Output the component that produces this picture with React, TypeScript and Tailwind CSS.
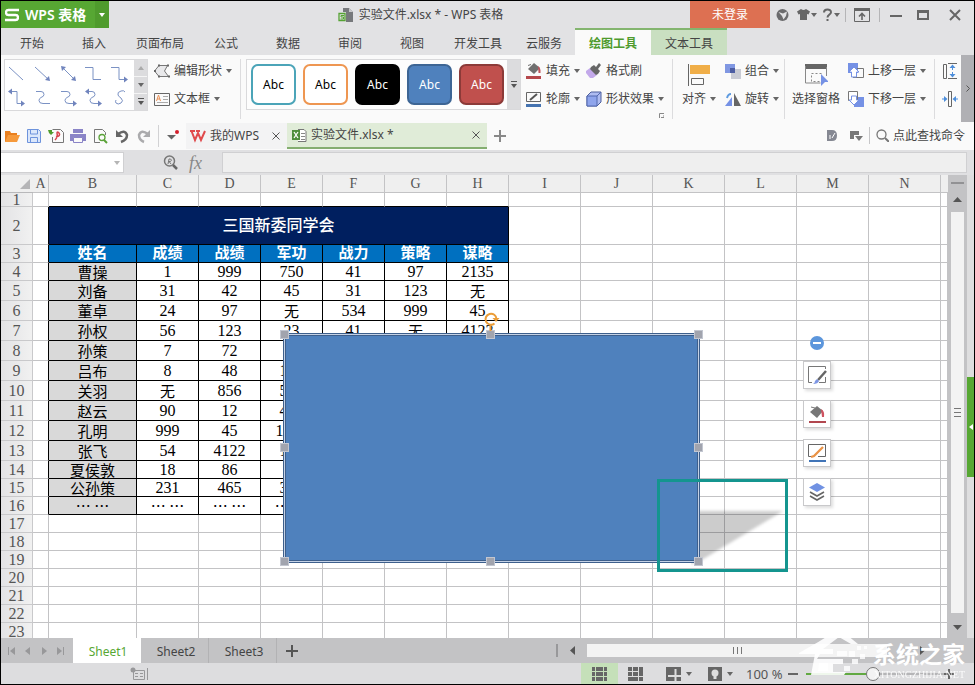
import type { ReactNode } from "react";

type Kids = { children?: ReactNode };

function Caret({ className = "text-[#666]" }: { className?: string }) {
  return (
    <svg className={`shrink-0 ${className}`} width="6" height="4" viewBox="0 0 6 4" aria-hidden="true">
      <path d="M0 0h6L3 4z" fill="currentColor" />
    </svg>
  );
}

function Icon({ w = 16, h = 16, children }: Kids & { w?: number; h?: number }) {
  return (
    <svg className="shrink-0" width={w} height={h} viewBox={`0 0 ${w} ${h}`} fill="none" aria-hidden="true">
      {children}
    </svg>
  );
}

/* ---------- Title bar ---------- */

function TitleBar() {
  return (
    <header className="flex h-[27px] shrink-0 text-[#444]">
      <button className="flex w-[108px] items-center bg-[#57a733] text-white" aria-label="WPS 表格">
        <span className="flex h-full w-[94px] items-center gap-[6px] pl-1">
          <Icon w={14} h={14}>
            <path d="M14 2H3.5Q1 2 1 4.5T3.5 7h7Q13 7 13 9.5T10.500 12H0" stroke="#fff" strokeWidth="2.400" />
          </Icon>
          <span className="text-[14px] leading-5 font-semibold whitespace-nowrap">WPS 表格</span>
        </span>
        <span className="flex h-full flex-1 items-center bg-[#4f9b2d] pl-[4px]">
          <Caret className="text-white" />
        </span>
      </button>
      <div className="flex flex-1 items-center justify-center gap-[6px] pl-[42px] text-[12px]">
        <Icon w={15} h={16}>
          <path d="M5 1h6l4 4v10H5z" fill="#77797c" />
          <path d="M11 1v4h4z" fill="#c9c9cb" />
          <path d="M0 5h8v10H0z" fill="#e2e2e4" />
          <path d="M1 6.500h6v7H1z" stroke="#56a334" strokeWidth="1.300" />
          <path d="M6 8.500H3v1.500h2.500v2H2.500" stroke="#56a334" />
        </Icon>
        <h1>实验文件.xlsx * - WPS 表格</h1>
      </div>
      <div className="flex items-center">
        <button className="h-full w-20 bg-[#dd7052] text-[12px] text-white">未登录</button>
        <button className="ml-[6px]" aria-label="皮肤中心">
          <Icon w={13} h={14}>
            <circle cx="6.500" cy="7" r="6" fill="#6b6b6d" />
            <path d="M2.500 4l4.500 1.500L11 3.500 10 8l-2.500 3.500L6 8z" fill="#e2e2e4" />
          </Icon>
        </button>
        <button className="ml-[8px] flex items-center gap-px" aria-label="更换皮肤">
          <Icon w={13} h={13}>
            <path d="M4 1q2.500 2 5 0l4 2.500-1.500 3L10 6v6H3V6l-1.500.5L0 3.500z" fill="#666" />
          </Icon>
          <Caret />
        </button>
        <button className="ml-[6px] flex items-center gap-[2px]" aria-label="帮助">
          <Icon w={9} h={14}>
            <path d="M1 4.500C1 .500 8 .500 8 4.200 8 6.500 4.500 6.500 4.500 9.500" stroke="#666" strokeWidth="2" />
            <path d="M3.500 11h2v2h-2z" fill="#666" />
          </Icon>
          <Caret />
        </button>
        <span className="ml-[5px] h-[14px] w-px bg-[#b5b5b7]" />
        <button className="ml-2" aria-label="隐藏功能区">
          <Icon>
            <path d="M.5 1.500h15v13H.5z" stroke="#666" />
            <path d="M0 1h16v3H0z" fill="#666" />
            <path d="M8 13V7M5 9.500 8 6.500l3 3" stroke="#666" strokeWidth="1.600" />
          </Icon>
        </button>
        <span className="ml-[9px] h-[14px] w-px bg-[#b5b5b7]" />
        <button className="ml-[10px]" aria-label="最小化">
          <Icon w={12} h={12}><path d="M0 7h12" stroke="#666" strokeWidth="2" /></Icon>
        </button>
        <button className="ml-[15px]" aria-label="最大化">
          <Icon w={12} h={12}><path d="M1 2h10v8H1zM1 3h10" stroke="#666" strokeWidth="2" /></Icon>
        </button>
        <button className="mr-[13px] ml-5" aria-label="关闭">
          <Icon w={12} h={12}><path d="M1 1l10 10M11 1 1 11" stroke="#666" strokeWidth="2" /></Icon>
        </button>
      </div>
    </header>
  );
}

/* ---------- Ribbon tabs ---------- */

const tabs = ["开始", "插入", "页面布局", "公式", "数据", "审阅", "视图", "开发工具", "云服务"];

function RibbonTabs() {
  return (
    <nav className="flex h-[27px] shrink-0 text-[12px] text-[#444]">
      {tabs.map((t) => (
        <button key={t} className="min-w-[62px] px-[11px] pt-[4px]">{t}</button>
      ))}
      <div className="flex border-t-2 border-[#84b56f]">
        <button className="w-[76px] bg-[#fafafa] pt-[2px] font-bold text-[#4f9b2d]">绘图工具</button>
        <button className="w-[76px] bg-[#c9dfc1] pt-[2px]">文本工具</button>
      </div>
    </nav>
  );
}

/* ---------- Ribbon ---------- */

const connectors: { label: string; line: string; heads?: string }[] = [
  { label: "直线", line: "M4 6l14 13" },
  { label: "箭头", line: "M4 6l14 13", heads: "M19 20l-5-1 4-4z" },
  { label: "双箭头", line: "M6 7l12 12", heads: "M4 5l5 1-4 4zM19 20l-5-1 4-4z" },
  { label: "肘形连接符", line: "M3 6.500h8v12h8" },
  { label: "肘形箭头", line: "M3 6.500h8v12h6", heads: "M20 18.500l-4-3v6z" },
  { label: "肘形双箭头", line: "M6 5.500h6v12h5", heads: "M3 5.500l4-3v6zM20 17.500l-4-3v6z" },
  { label: "曲线连接符", line: "M5 5.500h5q3 0 3 3 0 2-3 3-2 1-2 3 0 3 4 3h7" },
  { label: "曲线箭头", line: "M4 5.500h6q3 0 3 3 0 2-3 3-2 1-2 3 0 3 4 3h5", heads: "M20 17.500l-4-3v6z" },
  { label: "曲线双箭头", line: "M6 5.500h4q3 0 3 3 0 2-3 3-2 1-2 3 0 3 4 3h5", heads: "M3 5.500l4-3v6zM20 17.500l-4-3v6z" },
  { label: "曲线", line: "M17 6q-1-2-4-1-4 1-3 4 1 2 3 3 3 3 0 5-3 2-5 0-1-1 0-3" },
];

const styles = [
  { name: "蓝绿轮廓", cls: "border-[#4ba4b8] bg-white text-black" },
  { name: "橙色轮廓", cls: "border-[#ee9651] bg-white text-black" },
  { name: "黑色填充", cls: "border-black bg-black text-white" },
  { name: "蓝色填充", cls: "border-[#3d6594] bg-[#4f81bd] text-white" },
  { name: "红色填充", cls: "border-[#8c3a38] bg-[#c0504d] text-white" },
];

function Tool({ icon, label, drop = true }: { icon: ReactNode; label: string; drop?: boolean }) {
  return (
    <button className="flex h-6 items-center gap-1 whitespace-nowrap">
      {icon}
      <span>{label}</span>
      {drop && <Caret />}
    </button>
  );
}

function Group({ className, children }: Kids & { className: string }) {
  return <div className={`flex shrink-0 flex-col items-start gap-1 ${className}`}>{children}</div>;
}

function Divider() {
  return <span className="h-[60px] w-px shrink-0 bg-[#dcdcde]" />;
}

function BucketIcon() {
  return (
    <Icon>
      <path d="M8 0l6 5-6 6-6-5z" fill="#707070" />
      <path d="M2 2.500l3-1" stroke="#707070" />
      <path d="M12 3q3 2 2.500 7h-2z" fill="#c0545c" />
      <path d="M0 13h15v3H0z" fill="#b5474c" />
    </Icon>
  );
}

function Ribbon() {
  return (
    <section className="flex h-[67px] shrink-0 bg-[#fafafa] text-[12px] text-[#444]" aria-label="绘图工具">
      <div className="flex min-w-0 flex-1 items-start overflow-hidden pt-1 pl-[3px]">
        <div className="flex h-[52px] w-[144px] shrink-0 border border-[#d9d9db] bg-white">
          <div className="grid flex-1 grid-cols-5">
            {connectors.map((c) => (
              <button key={c.label} aria-label={c.label}>
                <Icon w={24} h={24}>
                  <path d={c.line} stroke="#7b92c4" />
                  {c.heads && <path d={c.heads} fill="#7084bd" />}
                </Icon>
              </button>
            ))}
          </div>
          <div className="flex w-[13px] flex-col bg-[#dcdcde]">
            <button className="flex flex-1 items-center justify-center" aria-label="上一行">
              <Icon w={6} h={4}><path d="M0 4h6L3 0z" fill="#aaa" /></Icon>
            </button>
            <button className="flex flex-1 items-center justify-center border-y border-[#f5f5f5]" aria-label="下一行"><Caret /></button>
            <button className="flex flex-1 items-center justify-center" aria-label="更多形状">
              <Icon w={6} h={8}><path d="M0 0h6v1H0zM0 3h6L3 7z" fill="#555" /></Icon>
            </button>
          </div>
        </div>
        <Group className="ml-[6px] w-[86px]">
          <Tool label="编辑形状" icon={
            <Icon><path d="M5 2.500h8.500L10.500 8l4 5.500H5L.5 8z" fill="#e9e9eb" stroke="#777" /><path d="M4 1.500h2v2H4zM13 1.500h2v2h-2zM4 12.500h2v2H4zM14 12.500h2v2h-2zM0 7h2v2H0z" fill="#666" /></Icon>
          } />
          <Tool label="文本框" icon={
            <Icon><path d="M.5 2.500h15v12H.5z" stroke="#666" /><path d="M2.500 10l2-6 2 6M3 8h3" stroke="#ea9157" /><path d="M9 5.500h5M9 8.500h5M3 11.500h11" stroke="#aaa" /></Icon>
          } />
        </Group>
        <Divider />
        <div className="ml-[5px] flex h-[51px] w-[275px] shrink-0 border border-[#d9d9db] bg-[#fdfdfd]">
          <div className="flex flex-1 items-center gap-[7px] pl-1">
            {styles.map((s) => (
              <button key={s.name} aria-label={s.name} className={`h-[41px] w-[45px] rounded-[7px] border-2 ${s.cls}`}>Abc</button>
            ))}
          </div>
          <button className="flex w-[13px] items-center justify-center bg-[#dcdcde]" aria-label="更多样式">
            <Icon w={6} h={8}><path d="M0 0h6v1H0zM0 3h6L3 7z" fill="#555" /></Icon>
          </button>
        </div>
        <Group className="ml-[5px] w-[60px]">
          <Tool label="填充" icon={<BucketIcon />} />
          <Tool label="轮廓" icon={
            <Icon><path d="M.5 1.500h14v9H.5z" stroke="#666" /><path d="M4 9l7-6" stroke="#555" strokeWidth="2" /><path d="M0 13h15v3H0z" fill="#4573b0" /></Icon>
          } />
        </Group>
        <Group className="w-[86px]">
          <Tool label="格式刷" drop={false} icon={
            <Icon><path d="M4 5l7 7-4 3H4L0 10V8z" fill="#c3a9ea" /><path d="M5 4l3-2 2 2 3-4 2 2-3 4 2 2-2 3-2 1-6-6z" fill="#666" /></Icon>
          } />
          <Tool label="形状效果" icon={
            <Icon><path d="M1 5l4-4h10v10l-4 4H1z" fill="#aebcf1" stroke="#4c5f9d" /><path d="M1 5h10v10H1z" fill="#8fa5ec" stroke="#5368ae" /><path d="M11 5l4-4" stroke="#5368ae" /></Icon>
          } />
          <button className="-mt-[2px] mr-[8px] self-end" aria-label="形状格式">
            <Icon w={5} h={5}><path d="M.5 5V.5H5M2 4.500h3V2" stroke="#888" /></Icon>
          </button>
        </Group>
        <Divider />
        <button className="flex w-[52px] shrink-0 flex-col items-center" aria-label="对齐">
          <Icon w={24} h={28}><path d="M3 6h20v9H3z" fill="#f0ae48" /><path d="M1.500 5v22M4.500 19.500h12v6h-12z" stroke="#666" /></Icon>
          <span className="flex h-6 items-center gap-1">对齐<Caret /></span>
        </button>
        <Group className="w-[59px]">
          <Tool label="组合" icon={<Icon><path d="M6 6h10v10H6z" fill="#c9cbd4" /><path d="M0 1h10v9H0z" fill="#8097e2" /><path d="M5 5h5v5H5z" fill="#4c5da3" /></Icon>} />
          <Tool label="旋转" icon={<Icon><path d="M0 15l7-9v9z" fill="#7591e5" /><path d="M9 2l7 13H9z" fill="#666" /><path d="M2 7q1-4 4-4" stroke="#5e9be0" strokeWidth="2" /></Icon>} />
        </Group>
        <Divider />
        <button className="ml-[7px] flex w-12 shrink-0 flex-col items-center whitespace-nowrap" aria-label="选择窗格">
          <Icon w={24} h={28}>
            <path d="M1 5h22v5H1z" fill="#666" /><path d="M1.500 7v17h15M22.500 8v9" stroke="#888" />
            <path d="M7.500 14.500h10v8h-10z" stroke="#888" strokeDasharray="2 2" /><path d="M17 15l8 8h-4l-4 4z" fill="#7591e5" />
          </Icon>
          <span className="flex h-6 items-center">选择窗格</span>
        </button>
        <Group className="ml-2 w-[86px]">
          <Tool label="上移一层" icon={<Icon><path d="M0 0h10v10H0z" fill="#7591e5" /><path d="M9 5.500h6.500v9H5" stroke="#777" /><path d="M6 4l5 5H8.500v5h-5V9H1z" fill="#fff" stroke="#7591e5" /></Icon>} />
          <Tool label="下移一层" icon={<Icon><path d="M6 6h10v10H6z" fill="#7591e5" /><path d="M.5.5h9v9h-9z" fill="#fff" stroke="#777" /><path d="M3.500 5h5v4H11l-5 5-5-5h2.500z" fill="#fff" stroke="#7591e5" /></Icon>} />
        </Group>
        <Divider />
        <Group className="ml-[7px] w-4">
          <button className="flex h-6 items-center" aria-label="行高">
            <Icon><path d="M1.500 1.500h3v14h-3zM6 .5h9M6 15.500h9" stroke="#666" /><path d="M10.500 3v10" stroke="#4d8edb" strokeDasharray="4 2" /><path d="M7.500 5l3-3.500 3 3.500zM7.500 11l3 3.500 3-3.500z" fill="#4d8edb" /></Icon>
          </button>
          <button className="flex h-6 items-center" aria-label="列宽">
            <Icon><path d="M6.500.5h3v15h-3z" stroke="#666" /><path d="M0 8h4M12 8h4" stroke="#4d8edb" /><path d="M2 5l3.500 3L2 11zM14 5l-3.500 3 3.500 3z" fill="#4d8edb" /></Icon>
          </button>
        </Group>
      </div>
      <button className="flex w-[13px] shrink-0 items-center justify-center bg-[#b0b0b4]" aria-label="向右滚动">
        <Icon w={4} h={7}><path d="M.5.5l3 3-3 3" stroke="#555" /></Icon>
      </button>
    </section>
  );
}

/* ---------- Quick access + document tabs ---------- */

const quick: { label: string; art: ReactNode }[] = [
  { label: "打开", art: <><path d="M1 14V3h5l1 2h6v3" fill="#e97f1e" /><path d="M1 14l3-7h12l-3 7z" fill="#f69a3b" /></> },
  { label: "保存", art: <><path d="M1.500 1.500h11l2 2v11h-13z" fill="#dbe7fb" stroke="#6d93dc" /><path d="M4.500 2v4h7V2M4.500 14V9.500h7V14" stroke="#6d93dc" /></> },
  { label: "输出为PDF", art: <><path d="M4.500 1.500h8l3 3v10h-11V9" stroke="#777" /><path d="M7 12q3-3 2-7 0-2 2 0 2 3-3 4" stroke="#d9444d" strokeWidth="1.500" /><path d="M0 2h4v2h2L3 7 1 5z" fill="#4f9b2d" /></> },
  { label: "打印", art: <><path d="M3 1h10v4H3zM0 6h16v7H0z" fill="#8a84c7" /><path d="M3.500 9.500h9v5h-9z" fill="#fafafa" stroke="#8a84c7" /></> },
  { label: "打印预览", art: <><path d="M13.500 7V4.500l-3-3h-8v13H8" stroke="#777" /><circle cx="10" cy="9.500" r="3" stroke="#5aa238" strokeWidth="1.300" /><path d="M12 12l3 3" stroke="#5aa238" strokeWidth="2" /></> },
  { label: "撤销", art: <><path d="M4 6q7-5 9 1 0 5-6 7" stroke="#666" strokeWidth="2.500" /><path d="M2 2v7h7z" fill="#666" /></> },
  { label: "恢复", art: <><path d="M12 6Q5 1 3 7q0 5 5 7" stroke="#ababad" strokeWidth="2.500" /><path d="M14 2v7H7z" fill="#ababad" /></> },
];

function CloseX() {
  return <Icon w={8} h={8}><path d="M.5.5l7 7M7.500.5l-7 7" stroke="#555" /></Icon>;
}

function DocBar() {
  return (
    <div className="flex h-[28px] shrink-0 items-stretch bg-[#fafafa] pt-px text-[12px] text-[#444]">
      <div className="flex w-[185px] shrink-0 items-center pb-[2px] pl-[3px]">
        <div className="flex gap-[6px]">
          {quick.map((q) => (
            <button key={q.label} aria-label={q.label}><Icon>{q.art}</Icon></button>
          ))}
        </div>
        <span className="ml-[6px] h-[22px] w-px bg-[#d2d2d4]" />
        <button className="ml-[8px]" aria-label="自定义快速访问工具栏">
          <Icon w={14} h={14}><path d="M0 6h9l-4.500 4.500z" fill="#666" /><circle cx="10" cy="3" r="2" fill="#d21f2c" /></Icon>
        </button>
      </div>
      <div className="mb-px flex w-[101px] items-center bg-[#f3f3f4] pl-1">
        <button className="flex items-center gap-1">
          <Icon><path d="M0 3h5M1.500 3l3.500 9 3-7 3 7 4-9M6 3h4" stroke="#e04a4c" strokeWidth="2" /></Icon>
          <span>我的WPS</span>
        </button>
        <button className="mr-[7px] ml-auto" aria-label="关闭 我的WPS"><CloseX /></button>
      </div>
      <div className="mb-px flex w-[200px] items-center border-b-2 border-[#84ae70] bg-[#e0ecd8] pl-[5px]">
        <button className="flex items-center gap-1">
          <Icon w={15} h={15}><path d="M6 1.500h6l2 2v10H6" fill="#fff" stroke="#777" /><path d="M9 5.500h4M9 8.500h4M9 11.500h4" stroke="#888" /><path d="M0 2h8v10H0z" fill="#4f8f3d" /><path d="M2 4l4 6M6 4l-4 6" stroke="#fff" strokeWidth="1.300" /></Icon>
          <span>实验文件.xlsx *</span>
        </button>
        <button className="mr-[7px] ml-auto" aria-label="关闭 实验文件.xlsx"><CloseX /></button>
      </div>
      <button className="ml-[7px] pb-[2px]" aria-label="新建"><Icon w={12} h={12}><path d="M6 0v12M0 6h12" stroke="#888" strokeWidth="2" /></Icon></button>
      <div className="ml-auto flex items-center pb-[2px]">
        <button aria-label="稻壳"><Icon w={10} h={11}><path d="M0 0h5q5 0 5 5.500T5 11H0z" fill="#858892" /><path d="M3 9V5M5 8l3-5" stroke="#fff" /></Icon></button>
        <button className="ml-[13px]" aria-label="窗口切换"><Icon w={13} h={12}><path d="M0 1h9v4H4v4H0z" fill="#777" /><path d="M5 6h8l-4 5z" fill="#777" /></Icon></button>
        <span className="ml-[6px] h-[17px] w-px bg-[#c6c6c8]" />
        <button className="mr-[9px] ml-[6px] flex items-center gap-1">
          <Icon w={13} h={13}><circle cx="5.500" cy="5.500" r="4.500" stroke="#777" strokeWidth="1.300" /><path d="M9 9l4 4" stroke="#777" strokeWidth="2" /></Icon>
          点此查找命令
        </button>
      </div>
    </div>
  );
}

function FormulaBar() {
  return (
    <div className="flex h-[25px] shrink-0 items-center bg-[#e0e0e2] pr-[7px]">
      <div className="flex h-[21px] w-[123px] items-center border border-l-0 border-[#d0d0d2] bg-white">
        <input aria-label="名称框" className="min-w-0 flex-1 bg-transparent px-1 text-[12px] outline-none" />
        <button className="mr-[3px]" aria-label="名称列表"><Caret className="text-[#b5b5b5]" /></button>
      </div>
      <button className="ml-[39px]" aria-label="浏览公式结果">
        <Icon w={15} h={15}><circle cx="6.500" cy="6" r="5" stroke="#777" strokeWidth="1.500" /><path d="M10 10l4 4" stroke="#666" strokeWidth="2.500" /><path d="M5 9l1-5h1.500q2 1 0 2.500H6L8 9" stroke="#777" /></Icon>
      </button>
      <button className="ml-[11px] h-5 font-['Liberation_Serif',serif] text-[18px] leading-5 text-[#888] italic" aria-label="插入函数">fx</button>
      <input aria-label="编辑栏" className="ml-5 h-[21px] min-w-0 flex-1 border border-[#d0d0d2] bg-[#efefef] px-1 text-[12px] outline-none" />
    </div>
  );
}

/* ---------- Worksheet ---------- */

const columns = ["A", "B", "C", "D", "E", "F", "G", "H", "I", "J", "K", "L", "M", "N"];
const header = ["姓名", "成绩", "战绩", "军功", "战力", "策略", "谋略"];
const people: string[][] = [
  ["曹操", "1", "999", "750", "41", "97", "2135"],
  ["刘备", "31", "42", "45", "31", "123", "无"],
  ["董卓", "24", "97", "无", "534", "999", "45"],
  ["孙权", "56", "123", "23", "41", "无", "4122"],
  ["孙策", "7", "72", "", "", "", ""],
  ["吕布", "8", "48", "123", "", "", ""],
  ["关羽", "无", "856", "534", "", "", ""],
  ["赵云", "90", "12", "412", "", "", ""],
  ["孔明", "999", "45", "1234", "", "", ""],
  ["张飞", "54", "4122", "123", "", "", ""],
  ["夏侯敦", "18", "86", "", "", "", ""],
  ["公孙策", "231", "465", "312", "", "", ""],
  ["… …", "… …", "… …", "… …", "… …", "… …", "… …"],
];

function Blank({ count, dark = false }: { count: number; dark?: boolean }) {
  return (
    <>
      {Array.from({ length: count }, (_, i) => (
        <td key={i} className={`border-r border-b border-[#c3c3c5] ${dark ? "border-b-black" : ""}`} />
      ))}
    </>
  );
}

function RowHead({ n }: { n: number }) {
  return (
    <th scope="row" className="border-r border-b border-[#c9c9cb] bg-linear-to-r from-[#e3e3e5] to-[#f1f1f1] font-normal text-[#555]">
      {n}
    </th>
  );
}

function Sheet() {
  return (
    <table className="w-full table-fixed border-separate border-spacing-0 bg-white text-center font-['Liberation_Serif','Noto_Sans_CJK_SC',serif] text-[16px] leading-[17px] text-black">
      <colgroup>
        <col className="w-8" />
        <col className="w-4" />
        <col className="w-[88px]" />
        {header.slice(1).map((h) => <col key={h} className="w-[62px]" />)}
        {columns.slice(8).map((c) => <col key={c} className="w-[72px]" />)}
        <col />
      </colgroup>
      <thead>
        <tr className="h-[18px] bg-[#efefef] text-[14px] text-[#555]">
          <th className="border-b border-[#b8b8ba]" aria-label="全选">
            <svg className="ml-[19px]" width="10" height="10" viewBox="0 0 10 10" aria-hidden="true"><path d="M10 0v10H0z" fill="#b5b5b7" /></svg>
          </th>
          {columns.map((c) => (
            <th key={c} scope="col" className="border-r border-b border-[#c3c3c5] font-normal">{c}</th>
          ))}
          <td className="border-b border-[#c3c3c5]" />
        </tr>
      </thead>
      <tbody>
        <tr className="h-[14px] leading-[13px]">
          <RowHead n={1} /><Blank count={1} /><Blank count={7} dark /><Blank count={7} />
        </tr>
        <tr className="h-[38px]">
          <RowHead n={2} />
          <td className="border-r border-b border-r-black border-b-[#c3c3c5]" />
          <td colSpan={7} className="border-r border-b border-black bg-[#001f5f] font-medium text-white">三国新委同学会</td>
          <Blank count={7} />
        </tr>
        <tr className="h-[18px]">
          <RowHead n={3} />
          <td className="border-r border-b border-r-black border-b-[#c3c3c5]" />
          {header.map((h) => (
            <th key={h} scope="col" className="border-r border-b border-black bg-[#0070c0] text-[15px] font-bold text-white">{h}</th>
          ))}
          <Blank count={7} />
        </tr>
        {people.map((p, r) => (
          <tr key={p[0]} className={r > 0 && r < 10 ? "h-5" : "h-[18px]"}>
            <RowHead n={r + 4} />
            <td className="border-r border-b border-r-black border-b-[#c3c3c5]" />
            {p.map((v, i) => (
              <td key={i} className={`border-r border-b border-black ${i === 0 ? "bg-[#d9d9d9]" : ""} ${/^\d+$/.test(v) ? "" : "font-['Noto_Sans_CJK_SC',sans-serif] text-[15px] leading-[15px]"}`}>{v}</td>
            ))}
            <Blank count={7} />
          </tr>
        ))}
        {[17, 18, 19, 20, 21, 22, 23].map((n) => (
          <tr key={n} className="h-[18px]"><RowHead n={n} /><Blank count={15} /></tr>
        ))}
      </tbody>
    </table>
  );
}

const handles = [
  "-top-1 -left-1", "-top-1 left-[202px]", "-top-1 -right-1",
  "top-[109px] -left-1", "top-[109px] -right-1",
  "-bottom-1 -left-1", "-bottom-1 left-[202px]", "-right-1 -bottom-1",
];

const floatTools: { label: string; art: ReactNode }[] = [
  { label: "形状样式", art: <><path d="M17.500 3V.5H.5v16H4M17.500 11v5.500H11" stroke="#777" /><path d="M18 5l-8 9" stroke="#666" strokeWidth="2.500" /><path d="M9 13l2 2q-1 3-6 3 2-1 2-3z" fill="#7d96e4" /></> },
  { label: "形状填充", art: <><path d="M9 1l6 5-6 7-7-6z" fill="#777" /><path d="M3 2l4 1" stroke="#777" /><path d="M13 4q4 2 3 8h-2z" fill="#cf5260" /><path d="M1 17h17" stroke="#b2474f" strokeWidth="2" /></> },
  { label: "形状轮廓", art: <><path d="M3 12.500H.5V.5h17v12H10" stroke="#666" /><path d="M15 3l-9 9-3 1" stroke="#ea9346" strokeWidth="2.300" /><path d="M1 17h17" stroke="#4074b7" strokeWidth="2" /></> },
  { label: "叠放次序", art: <><path d="M9 0l8 4.500L9 9 1 4.500z" fill="#7192e3" /><path d="M2 9l7 4 7-4M2 13l7 4 7-4" stroke="#666" strokeWidth="1.600" /></> },
];

function DrawingLayer() {
  return (
    <>
      <svg className="absolute top-[325px] left-[690px]" width="110" height="70" viewBox="0 0 110 70" aria-hidden="true">
        <defs><filter id="soft"><feGaussianBlur stdDeviation="1.500" /></filter></defs>
        <path d="M0 11h92L9 61 0 64z" fill="#000" fillOpacity=".2" filter="url(#soft)" />
      </svg>
      <div className="absolute top-[158px] left-[282px] h-[230px] w-[417px] border border-[#3d5f8c] bg-[#c4d2e6] p-px">
        <div className="h-full border border-[#3d5f8c] bg-[#4f81bd]" />
        {handles.map((h) => (
          <span key={h} className={`absolute size-[9px] border border-[#c2c6d0] bg-[#a1a4ae] ${h}`} />
        ))}
        <svg className="absolute -top-[23px] left-[199px]" width="17" height="20" viewBox="0 0 17 20" fill="none" aria-hidden="true">
          <path d="M13.500 8a5.500 5.500 0 1 0-2 4.500M7.500 14v6" stroke="#eb9d38" strokeWidth="2" />
          <path d="M9.500 7h7L13 11z" fill="#eb9d38" />
        </svg>
      </div>
      <div className="absolute top-[304px] left-[656px] h-[93px] w-[131px] border-[3px] border-[#14958f]" />
      <div className="absolute top-[161px] left-[802px] flex flex-col items-center gap-[11px]">
        <button className="size-[14px]" aria-label="收起">
          <Icon w={14} h={14}><circle cx="7" cy="7" r="7" fill="#5c96dc" /><path d="M3 7h8" stroke="#fff" strokeWidth="2" /></Icon>
        </button>
        {floatTools.map((t) => (
          <button key={t.label} aria-label={t.label} className="flex size-7 items-center justify-center border border-[#c9c9cb] bg-white shadow-[2px_2px_3px_#0002]">
            <Icon w={19} h={19}>{t.art}</Icon>
          </button>
        ))}
      </div>
    </>
  );
}

function Workspace() {
  return (
    <main className="flex min-h-0 flex-1">
      <div className="relative min-w-0 flex-1 overflow-hidden">
        <Sheet />
        <DrawingLayer />
      </div>
      <div className="flex w-[19px] shrink-0 flex-col items-center bg-[#c3c3c5]">
        <span className="mt-[7px] h-[2px] w-[13px] bg-[#929294]" />
        <button className="mt-[13px]" aria-label="向上滚动"><Icon w={9} h={5}><path d="M0 5h9L4.500 0z" fill="#555" /></Icon></button>
        <div className="mt-[10px] flex w-[13px] flex-1 flex-col items-center justify-center gap-[3px] bg-[#f3f3f3]">
          <span className="h-px w-[7px] bg-[#777]" /><span className="h-px w-[7px] bg-[#777]" /><span className="h-px w-[7px] bg-[#777]" />
        </div>
        <button className="mt-3 mb-2" aria-label="向下滚动"><Icon w={9} h={5}><path d="M0 0h9L4.500 5z" fill="#555" /></Icon></button>
      </div>
      <div className="flex w-[7px] shrink-0 flex-col bg-[#dededf] pt-[202px]">
        <button className="flex h-[100px] items-center bg-[#57a733] pl-[2px]" aria-label="展开任务窗格">
          <Icon w={4} h={6}><path d="M4 0v6L0 3z" fill="#fff" /></Icon>
        </button>
      </div>
    </main>
  );
}

/* ---------- Sheet tabs and status bar ---------- */

const nav: { label: string; d: string }[] = [
  { label: "第一张", d: "M0 0h1v8H0zM7 0v8L2 4z" },
  { label: "上一张", d: "M6 0v8L1 4z" },
  { label: "下一张", d: "M1 0v8l5-4z" },
  { label: "最后一张", d: "M0 0v8l5-4zM6 0h1v8H6z" },
];

function SheetTabs() {
  return (
    <div className="flex h-[25px] shrink-0 bg-[#c3c3c5] pr-[7px] text-[12px] text-[#444]">
      <div className="flex w-[72px] items-center justify-between pr-[9px] pl-[7px]">
        {nav.map((n) => (
          <button key={n.label} aria-label={n.label}><Icon w={7} h={8}><path d={n.d} fill="#98989a" /></Icon></button>
        ))}
      </div>
      <button className="w-[68px] bg-white pt-[2px] pl-[2px] text-[#57a733]">Sheet1</button>
      <button className="w-[68px] border-r border-[#b2b2b4] pt-[2px] pl-[3px]">Sheet2</button>
      <button className="w-[68px] border-r border-[#b2b2b4] pt-[2px] pl-[3px]">Sheet3</button>
      <button className="ml-[9px]" aria-label="新建工作表"><Icon w={12} h={12}><path d="M6 0v12M0 6h12" stroke="#555" strokeWidth="2" /></Icon></button>
      <div className="ml-auto flex items-center">
        <span className="h-[13px] w-[2px] bg-[#98989a]" />
        <button className="ml-[12px]" aria-label="向左滚动"><Icon w={5} h={9}><path d="M5 0v9L0 4.500z" fill="#555" /></Icon></button>
        <div className="ml-3 flex h-[13px] w-[300px] items-center justify-center gap-[3px] bg-[#f3f3f3]">
          <span className="h-[7px] w-px bg-[#777]" /><span className="h-[7px] w-px bg-[#777]" /><span className="h-[7px] w-px bg-[#777]" />
        </div>
        <button className="mr-[42px] ml-[33px]" aria-label="向右滚动"><Icon w={5} h={9}><path d="M0 0v9l5-4.500z" fill="#555" /></Icon></button>
      </div>
    </div>
  );
}

function StatusBar() {
  return (
    <footer className="flex h-[21px] shrink-0 items-center bg-[#dddddf] text-[#555]">
      <Icon w={144} h={16}><path d="M132.500 4.500h11v9h-11z" stroke="#98989a" /><path d="M134 7.500h3M139 7.500h3M134 10.500h3M139 10.500h3" stroke="#98989a" /><circle cx="132" cy="4" r="2.500" fill="#98989a" /></Icon>
      <span className="ml-[2px] h-3 w-px bg-[#98989a]" />
      <div className="mr-[20px] ml-auto flex h-full items-center">
        <button className="flex h-full w-[37px] items-center justify-center bg-[#c5e0b9]" aria-label="普通视图">
          <Icon w={15} h={14}><path d="M0 0h15v14H0z" fill="#666" /><path d="M0 4.500h15M0 9.500h15M3.500 0v14M11.500 0v14" stroke="#c5e0b9" /></Icon>
        </button>
        <button className="ml-[10px]" aria-label="分页预览">
          <Icon w={15} h={14}><path d="M0 0h15v14H0z" fill="#666" /><path d="M0 4.500h10M0 9.500h15M4.500 0v9M10.500 0v14" stroke="#ddd" /></Icon>
        </button>
        <button className="ml-[23px] flex items-center gap-[5px]" aria-label="冻结窗格">
          <Icon w={15} h={14}><path d="M0 0h15v14H0z" fill="#666" /><path d="M2 9h13M9.500 2v12" stroke="#ddd" strokeWidth="2" /></Icon><Caret />
        </button>
        <button className="ml-4 flex items-center gap-[5px]" aria-label="护眼模式">
          <Icon w={14} h={14}><path d="M0 0h14v14H0z" fill="#666" /><circle cx="7" cy="6" r="3.500" fill="#ddd" /><path d="M5.500 9h3v3h-3z" fill="#ddd" /></Icon><Caret />
        </button>
        <span className="ml-[13px] w-[38px] text-[13px] leading-4 whitespace-nowrap">100 %</span>
        <button className="ml-1" aria-label="缩小"><Icon w={10} h={10}><path d="M0 5h10" stroke="#666" strokeWidth="2" /></Icon></button>
        <input
          type="range" aria-label="显示比例" min={0} max={100} defaultValue={48}
          className="mx-2 h-[14px] w-[138px] appearance-none bg-[linear-gradient(to_right,#62a942_50%,#b5b5b7_50%)] bg-[length:100%_2px] bg-center bg-no-repeat [&::-webkit-slider-thumb]:size-[14px] [&::-webkit-slider-thumb]:appearance-none [&::-webkit-slider-thumb]:rounded-full [&::-webkit-slider-thumb]:border [&::-webkit-slider-thumb]:border-[#777] [&::-webkit-slider-thumb]:bg-[#f3f3f3]"
        />
        <button className="-ml-2" aria-label="放大"><Icon w={10} h={10}><path d="M5 0v10M0 5h10" stroke="#666" strokeWidth="2" /></Icon></button>
      </div>
    </footer>
  );
}

function SiteMark() {
  return (
    <div className="pointer-events-none absolute right-[9px] bottom-[2px] flex items-end text-white">
      <svg className="mb-[7px]" width="70" height="46" viewBox="0 0 70 46" aria-hidden="true">
        <path d="M0 24Q20 13 37 2q3-2 6 0l16 13h-7L40 8 24 20h10v5H21l-3 5h26v5H34v8h13l-2 3H12l4-21H0z" fill="#fff" fillOpacity=".9" />
        <path d="M20 34h9v8H19zM38 22h10v5H38zM50 22h6v6h-6zM58 17h4v4h-4zM53 30h6v5h-6zM61 25h5v5h-5zM45 37h6v5h-6zM65 17h3v3h-3z" fill="#fff" fillOpacity=".8" />
      </svg>
      <div className="ml-1 flex flex-col items-end">
        <span className="font-['Noto_Sans_CJK_SC',sans-serif] text-[23px] leading-[30px] font-bold">系统之家</span>
        <span className="font-['Liberation_Serif',serif] text-[10px] leading-[14px] opacity-90">XITONGZHIJIA.NET</span>
      </div>
    </div>
  );
}

export default function App() {
  return (
    <div className="relative flex h-screen flex-col overflow-hidden border border-black bg-[#e2e2e4] font-['Noto_Sans','Noto_Sans_CJK_SC',sans-serif]">
      <TitleBar />
      <RibbonTabs />
      <Ribbon />
      <DocBar />
      <FormulaBar />
      <Workspace />
      <SheetTabs />
      <StatusBar />
      <SiteMark />
    </div>
  );
}
